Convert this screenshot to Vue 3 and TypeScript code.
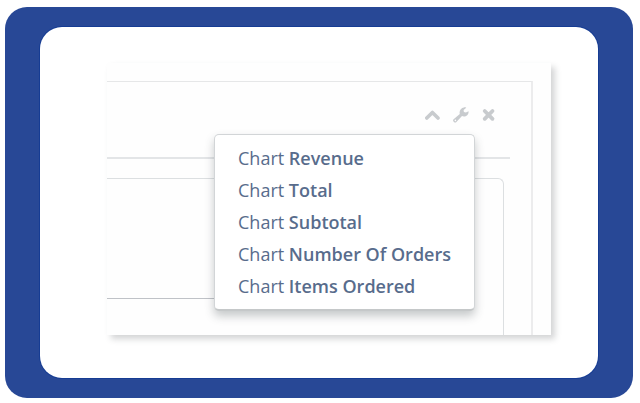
<script setup lang="ts">
import { ref } from 'vue'

const metrics: string[] = ['Revenue', 'Total', 'Subtotal', 'Number Of Orders', 'Items Ordered']
const selected = ref<string>('')
</script>

<template>
  <main class="frame">
    <section class="stage">
      <div class="sheet">
        <div class="panel">
          <header class="panel-head">
            <button type="button" class="tool" aria-label="Collapse">
              <svg width="16" height="16" viewBox="0 0 16 16">
                <path d="M1.800 11 7.400 5.400 13 11" fill="none" stroke="currentColor" stroke-width="3.600" stroke-linecap="round" stroke-linejoin="round" />
              </svg>
            </button>
            <button type="button" class="tool" aria-label="Settings">
              <svg width="16" height="16" viewBox="0 0 16 16">
                <path
                  fill-rule="evenodd"
                  fill="currentColor"
                  d="M15.6 4.3c.2 2.900-2 5.100-4.700 5.100-.7 0-1.300-.1-1.900-.4l-5.600 6c-.7.700-1.700.700-2.400 0l-.4-.4c-.7-.7-.7-1.700 0-2.400L6.800 6.900c-.9-3 1-6.100 4.100-6.500.9-.1 1.700 0 2.400.3l-2.700 2.200.3 2.100 2 .6zM2.400 12.600a.8.8 0 1 0 0 1.600.8.8 0 0 0 0-1.600z"
                />
              </svg>
            </button>
            <button type="button" class="tool" aria-label="Close">
              <svg width="16" height="16" viewBox="0 0 16 16">
                <path d="m3.700 4 7.800 7.800m0-7.800-7.800 7.800" fill="none" stroke="currentColor" stroke-width="3.800" stroke-linecap="round" />
              </svg>
            </button>
          </header>
          <div class="chart-box">
            <div class="chart-area"></div>
          </div>
          <nav class="menu" aria-label="Chart metric">
            <button
              v-for="metric in metrics"
              :key="metric"
              type="button"
              class="menu-item"
              @click="selected = metric"
            >
              Chart <strong>{{ metric }}</strong>
            </button>
          </nav>
        </div>
      </div>
    </section>
  </main>
</template>

<style>
body {
  margin: 0;
  background: #fff;
}
#app {
  display: flex;
  min-height: 100vh;
  box-sizing: border-box;
  padding: 7px 7px 5px 5px;
}
</style>

<style scoped>
.frame {
  flex: 1;
  display: flex;
  padding: 20px 35px;
  border-radius: 22px;
  background: #284896;
  font-family: "Open Sans", "Noto Sans", sans-serif;
}
.stage {
  flex: 1;
  display: flex;
  box-sizing: border-box;
  padding: 36px 47px 43px 67px;
  border-radius: 22px;
  background: #fff;
  box-shadow: 0 0 0 1px #163c93;
}
.sheet {
  flex: 1;
  display: flex;
  padding: 18px 18px 0 0;
  background: #fefefe;
  box-shadow: 4px 4px 6px rgba(60, 65, 70, 0.22);
}
.panel {
  position: relative;
  flex: 1;
  display: flex;
  flex-direction: column;
  border-top: 1px solid #e6e7e8;
  border-right: 2px solid #ececed;
}
.panel-head {
  display: flex;
  justify-content: flex-end;
  gap: 12px;
  margin-right: 21px;
  padding: 25px 13px 34px 0;
  border-bottom: 2px solid #e3e5e7;
}
.tool {
  display: block;
  width: 16px;
  height: 16px;
  padding: 0;
  border: 0;
  background: none;
  color: #c8cbce;
  cursor: pointer;
}
.tool svg {
  display: block;
}
.chart-box {
  flex: 1;
  margin: 19px 27px 0 0;
  border: 1px solid #dcdfe1;
  border-width: 1px 1px 0 0;
  border-top-right-radius: 6px;
}
.chart-area {
  width: 50%;
  height: 119px;
  border-bottom: 1px solid #bfc2c7;
}
.menu {
  position: absolute;
  top: 52px;
  right: 56px;
  display: flex;
  flex-direction: column;
  padding: 7px 23px;
  border: 1px solid #d2d5d7;
  border-bottom: 2px solid #c5c8c9;
  border-radius: 5px;
  background: #fff;
  box-shadow: 0 5px 10px rgba(50, 60, 65, 0.28);
}
.menu-item {
  padding: 0;
  border: 0;
  background: none;
  color: #586c8c;
  font: 400 18px/32px "Open Sans", "Noto Sans", sans-serif;
  text-align: left;
  white-space: nowrap;
  cursor: pointer;
}
.menu-item strong {
  font-weight: 600;
}
</style>
